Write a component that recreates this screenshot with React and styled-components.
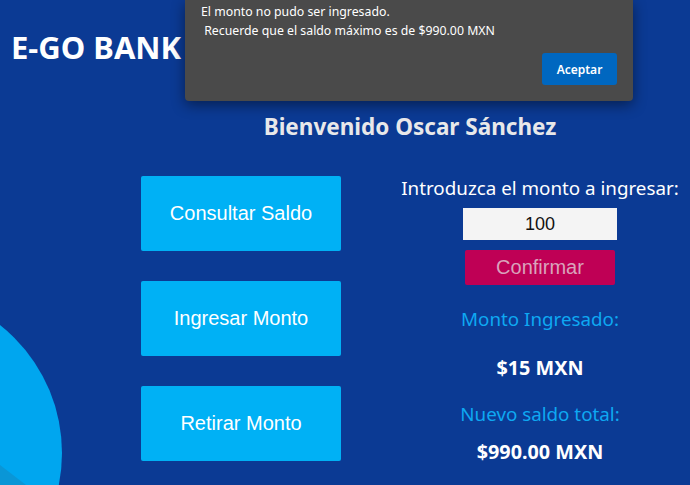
import React, { useState } from "react";
import styled, { createGlobalStyle } from "styled-components";

const GlobalStyle = createGlobalStyle`
  html, body {
    margin: 0;
    padding: 0;
    background: #0b3a94;
  }
  body {
    font-family: "Noto Sans", "Open Sans", sans-serif;
  }
`;

export default function App() {
  const [monto, setMonto] = useState("100");
  return (
    <Page>
      <GlobalStyle />
      <Decoration width="170" height="180" viewBox="0 0 170 180">
        <circle cx="-101" cy="148" r="163" fill="#00a6ef" />
        <polygon points="0,160 0,180 26,180" fill="#0a96d6" />
      </Decoration>

      <Header>
        <Logo>E-GO BANK</Logo>
      </Header>

      <Welcome>Bienvenido Oscar Sánchez</Welcome>

      <Main>
        <Menu>
          <MenuButton>Consultar Saldo</MenuButton>
          <MenuButton>Ingresar Monto</MenuButton>
          <MenuButton>Retirar Monto</MenuButton>
        </Menu>

        <Panel>
          <Label>Introduzca el monto a ingresar:</Label>
          <AmountInput value={monto} onChange={e => setMonto(e.target.value)} />
          <ConfirmButton>Confirmar</ConfirmButton>
          <Label accent top={22}>Monto Ingresado:</Label>
          <Value top={25}>$15 MXN</Value>
          <Label accent top={22}>Nuevo saldo total:</Label>
          <Value top={14}>$990.00 MXN</Value>
        </Panel>
      </Main>

      <Alert>
        <AlertText>
          El monto no pudo ser ingresado.
          <br />
          &nbsp;Recuerde que el saldo máximo es de $990.00 MXN
        </AlertText>
        <AlertActions>
          <AlertButton>Aceptar</AlertButton>
        </AlertActions>
      </Alert>
    </Page>
  );
}

const Page = styled.div`
  position: relative;
  min-height: 100vh;
  overflow: hidden;
  color: #fff;
`;

const Decoration = styled.svg`
  position: absolute;
  left: 0;
  bottom: 0;
  display: block;
`;

const Header = styled.header`
  padding: 27px 11px 0;
  height: 64px;
  box-sizing: border-box;
`;

const Logo = styled.h1`
  margin: 0;
  font-size: 31px;
  line-height: 40px;
  font-weight: 700;
  color: #fff;
`;

const Welcome = styled.h2`
  margin: 48px 0 0;
  padding-left: 130px;
  text-align: center;
  font-size: 22.5px;
  line-height: 30px;
  font-weight: 700;
  color: #e8e8ea;
`;

const Main = styled.main`
  display: flex;
  margin-top: 34px;
  padding-left: 141px;
  gap: 49px;
`;

const Menu = styled.nav`
  display: flex;
  flex-direction: column;
  gap: 30px;
  width: 200px;
`;

const MenuButton = styled.button`
  height: 75px;
  border: none;
  border-radius: 2px;
  background: #00b1f5;
  color: #fff;
  font-family: "Liberation Sans", Arial, sans-serif;
  font-size: 20px;
  cursor: pointer;
`;

const Panel = styled.section`
  width: 300px;
  display: flex;
  flex-direction: column;
  align-items: center;
`;

const Label = styled.p`
  margin: ${p => p.top || 0}px 0 0;
  font-size: 18.8px;
  line-height: 24px;
  color: ${p => (p.accent ? "#0ea8f2" : "#fff")};
`;

const Value = styled.p`
  margin: ${p => p.top || 0}px 0 0;
  font-size: 19.8px;
  line-height: 24px;
  font-weight: 700;
  color: #fff;
`;

const AmountInput = styled.input`
  margin-top: 8px;
  width: 154px;
  height: 32px;
  box-sizing: border-box;
  border: none;
  outline: none;
  background: #f4f4f4;
  text-align: center;
  font-family: "Liberation Sans", Arial, sans-serif;
  font-size: 18px;
  color: #111;
`;

const ConfirmButton = styled.button`
  margin-top: 10px;
  width: 150px;
  height: 35px;
  border: none;
  border-radius: 2px;
  background: #bf0055;
  color: #d9a3bc;
  font-family: "Liberation Sans", Arial, sans-serif;
  font-size: 20px;
  cursor: pointer;
`;

const Alert = styled.div`
  position: absolute;
  top: 0;
  left: 185px;
  width: 448px;
  height: 101px;
  box-sizing: border-box;
  padding: 2px 16px 16px;
  background: #4a4a4a;
  border-radius: 0 0 4px 4px;
  box-shadow: 0 4px 14px rgba(0, 0, 0, 0.45);
  display: flex;
  flex-direction: column;
  justify-content: space-between;
`;

const AlertText = styled.p`
  margin: 0;
  font-size: 12.3px;
  line-height: 19px;
  color: #fff;
`;

const AlertActions = styled.div`
  display: flex;
  justify-content: flex-end;
`;

const AlertButton = styled.button`
  width: 75px;
  height: 32px;
  border: none;
  border-radius: 3px;
  background: #0067c0;
  color: #fff;
  font-family: "Noto Sans", sans-serif;
  font-size: 12px;
  font-weight: 600;
`;
